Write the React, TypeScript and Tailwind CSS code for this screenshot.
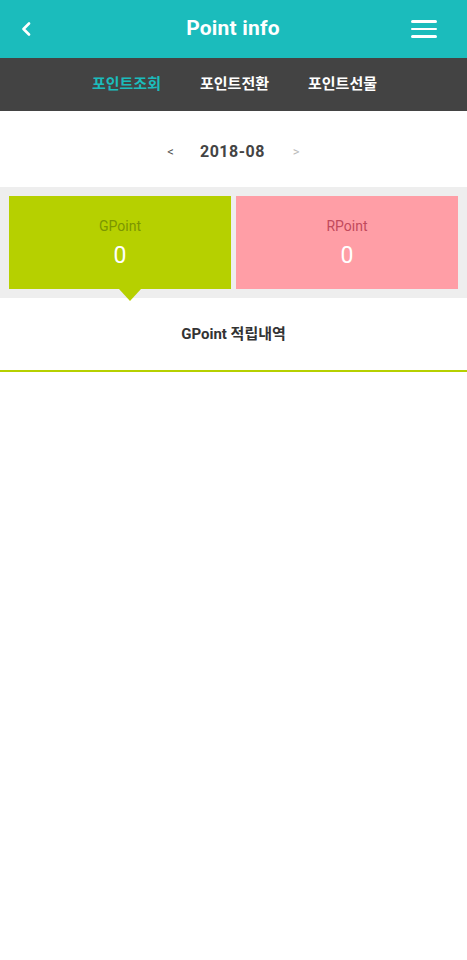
import React from 'react';

const tabs = [
  { label: '포인트조회', active: true },
  { label: '포인트전환', active: false },
  { label: '포인트선물', active: false },
];

export default function App() {
  return (
    <div
      className="min-h-[960px] bg-white flex flex-col"
      style={{ fontFamily: 'Roboto, "Noto Sans CJK KR", "Noto Sans", sans-serif' }}
    >
      {/* header */}
      <header className="h-[58px] bg-[#1bbcbc] flex items-center text-white">
        <div className="flex-1 flex items-center pl-[21px]">
          <svg width="10" height="14" viewBox="0 0 10 14" fill="none">
            <path d="M8 1.5 L2.5 7 L8 12.5" stroke="white" strokeWidth="2.6" strokeLinecap="round" strokeLinejoin="round" />
          </svg>
        </div>
        <h1 className="text-[21px] font-bold tracking-[0.2px] pl-[8px]">Point info</h1>
        <div className="flex-1 flex justify-end pr-[30px]">
          <div className="w-[26px] flex flex-col gap-[5px]">
            <span className="block h-[2.5px] bg-white rounded-full" />
            <span className="block h-[2.5px] bg-white rounded-full" />
            <span className="block h-[2.5px] bg-white rounded-full" />
          </div>
        </div>
      </header>

      {/* tabs */}
      <nav className="h-[53px] bg-[#434343] flex items-center justify-center gap-[39px] pl-[2px]">
        {tabs.map((t) => (
          <span
            key={t.label}
            className={`text-[15px] font-bold ${t.active ? 'text-[#1bbcbc]' : 'text-white'}`}
          >
            {t.label}
          </span>
        ))}
      </nav>

      {/* month selector */}
      <div className="h-[76px] flex items-center justify-center pt-[6px]">
        <span className="text-[13px] text-[#555] mr-[26px]">&lt;</span>
        <span className="text-[16px] font-bold text-[#444] tracking-[0.5px]">2018-08</span>
        <span className="text-[13px] text-[#bbb] ml-[28px]">&gt;</span>
      </div>

      {/* point cards */}
      <div className="relative bg-[#eeeeee] px-[9px] pt-[9px] pb-[9px] flex gap-[5px]">
        <div className="flex-1 h-[93px] bg-[#b6d000] flex flex-col items-center justify-center">
          <span className="text-[14px] text-[#7c9600] leading-none">GPoint</span>
          <span className="text-[23px] text-white leading-none mt-[11px]">0</span>
        </div>
        <div className="flex-1 h-[93px] bg-[#ff9ea6] flex flex-col items-center justify-center">
          <span className="text-[14px] text-[#c24a5c] leading-none">RPoint</span>
          <span className="text-[23px] text-white leading-none mt-[11px]">0</span>
        </div>
        <span className="absolute left-[119px] top-[102px] w-0 h-0 border-l-[11px] border-r-[11px] border-t-[12px] border-l-transparent border-r-transparent border-t-[#b6d000]" />
      </div>

      {/* section title */}
      <div className="h-[74px] flex items-center justify-center border-b-2 border-[#b6d000]">
        <span className="text-[15px] font-bold text-[#333]">GPoint 적립내역</span>
      </div>

      <div className="flex-1" />
    </div>
  );
}
